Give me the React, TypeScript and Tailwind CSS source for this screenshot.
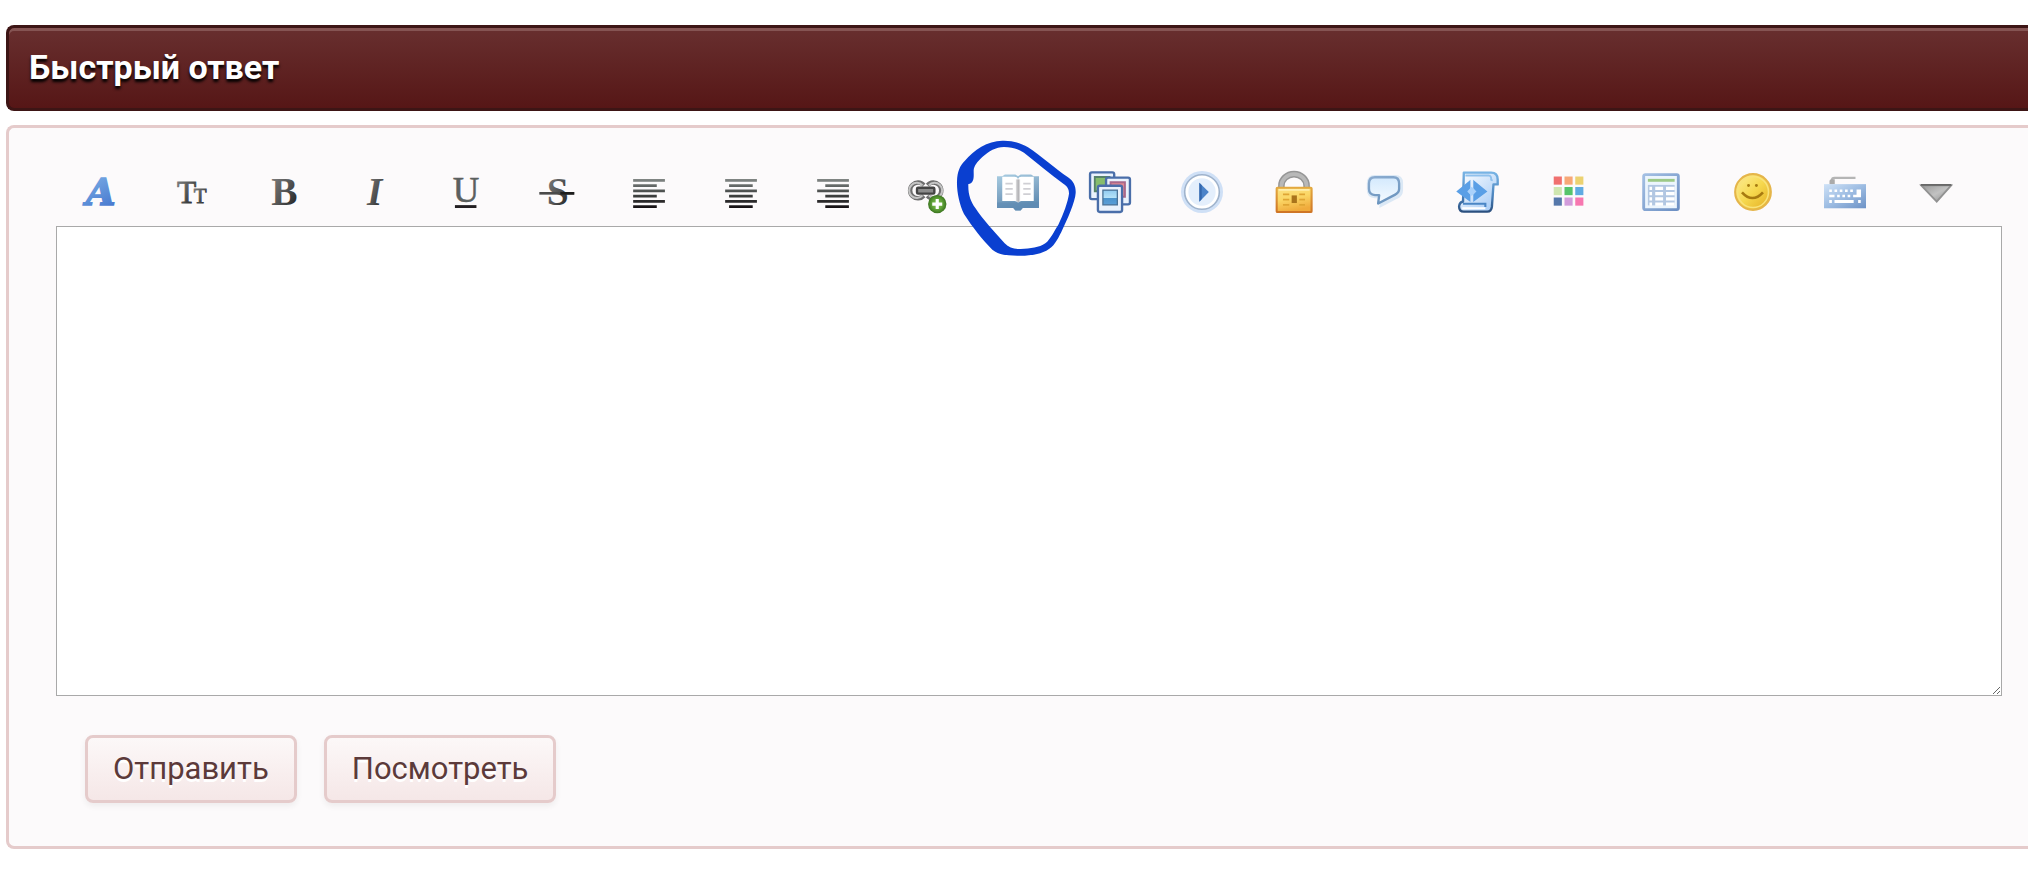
import { useState, type ReactNode } from 'react';

function Glyph({ children }: { children: ReactNode }) {
  return (
    <svg viewBox="0 0 16 16" className="block h-[42px] w-[42px] overflow-visible" aria-hidden="true">
      {children}
    </svg>
  );
}

function Gradients() {
  return (
    <svg className="absolute h-0 w-0" aria-hidden="true">
      <defs>
        <linearGradient id="blueLetter" x1="0" y1="0" x2="0.4" y2="1">
          <stop offset="0" stopColor="#84b9ea" />
          <stop offset="1" stopColor="#4a7bd0" />
        </linearGradient>
        <linearGradient id="ink" x1="0" y1="0" x2="1" y2="1">
          <stop offset="0" stopColor="#858585" />
          <stop offset="0.5" stopColor="#555555" />
          <stop offset="1" stopColor="#141414" />
        </linearGradient>
        <linearGradient id="bars" gradientUnits="userSpaceOnUse" x1="0" y1="3" x2="0" y2="14">
          <stop offset="0" stopColor="#828785" />
          <stop offset="0.5" stopColor="#454847" />
          <stop offset="1" stopColor="#151114" />
        </linearGradient>
        <radialGradient id="greenBall" cx="0.5" cy="0.5" r="0.5">
          <stop offset="0" stopColor="#8cc95a" />
          <stop offset="0.6" stopColor="#5fa237" />
          <stop offset="1" stopColor="#3b7420" />
        </radialGradient>
        <linearGradient id="bookCover" x1="0" y1="0" x2="0.3" y2="1">
          <stop offset="0" stopColor="#a9cde2" />
          <stop offset="0.6" stopColor="#7fa5c4" />
          <stop offset="1" stopColor="#5f8db3" />
        </linearGradient>
        <linearGradient id="sky" x1="0" y1="0" x2="0" y2="1">
          <stop offset="0" stopColor="#8fcaf0" />
          <stop offset="0.5" stopColor="#b5e2f8" />
          <stop offset="0.55" stopColor="#4c93cc" />
          <stop offset="1" stopColor="#5a9fd8" />
        </linearGradient>
        <linearGradient id="lockBody" x1="0" y1="0" x2="0.3" y2="1">
          <stop offset="0" stopColor="#fbe184" />
          <stop offset="0.5" stopColor="#fbd766" />
          <stop offset="1" stopColor="#f0ab3c" />
        </linearGradient>
        <linearGradient id="lockEdge" x1="0" y1="0" x2="0" y2="1">
          <stop offset="0" stopColor="#e3a83f" />
          <stop offset="1" stopColor="#cf7526" />
        </linearGradient>
        <linearGradient id="bubble" x1="0" y1="0" x2="0" y2="1">
          <stop offset="0" stopColor="#d3e9fd" />
          <stop offset="1" stopColor="#f6fbff" />
        </linearGradient>
        <linearGradient id="bubbleEdge" x1="0" y1="0" x2="0.3" y2="1">
          <stop offset="0" stopColor="#8aabcf" />
          <stop offset="1" stopColor="#6c95bf" />
        </linearGradient>
        <linearGradient id="scrollEdge" x1="0" y1="0" x2="0" y2="1">
          <stop offset="0" stopColor="#77b3e4" />
          <stop offset="0.6" stopColor="#4b83bd" />
          <stop offset="1" stopColor="#2b4f7e" />
        </linearGradient>
        <linearGradient id="scrollPaper" x1="0" y1="0" x2="1" y2="1">
          <stop offset="0" stopColor="#ffffff" />
          <stop offset="1" stopColor="#9fc7f5" />
        </linearGradient>
        <linearGradient id="sheetEdge" x1="0" y1="0" x2="1" y2="1">
          <stop offset="0" stopColor="#a3bfe3" />
          <stop offset="1" stopColor="#6c8fc3" />
        </linearGradient>
        <linearGradient id="smile" x1="0" y1="0" x2="1" y2="1">
          <stop offset="0" stopColor="#fdee9a" />
          <stop offset="0.5" stopColor="#f6d84e" />
          <stop offset="1" stopColor="#e2ab1e" />
        </linearGradient>
        <linearGradient id="keys" x1="0" y1="0" x2="1" y2="1">
          <stop offset="0" stopColor="#cfe2f7" />
          <stop offset="0.5" stopColor="#9dbce2" />
          <stop offset="1" stopColor="#6d92c6" />
        </linearGradient>
        <linearGradient id="arrow" x1="0" y1="0" x2="1" y2="1">
          <stop offset="0" stopColor="#9a9a9a" />
          <stop offset="0.5" stopColor="#c2c2c2" />
          <stop offset="1" stopColor="#8a8a8a" />
        </linearGradient>
      </defs>
    </svg>
  );
}

function FontIcon() {
  return (
    <Glyph>
      <text
        x="2.7"
        y="12.8"
        fontSize="14.5"
        className="font-['DejaVu_Serif'] font-bold italic"
        fill="url(#blueLetter)"
        stroke="url(#blueLetter)"
        strokeWidth="0.6"
      >
        A
      </text>
    </Glyph>
  );
}

function SizeIcon() {
  return (
    <Glyph>
      <g className="font-['Liberation_Serif']" fill="url(#ink)" stroke="url(#ink)" strokeWidth="0.3">
        <text x="2.3" y="12" fontSize="12">T</text>
        <text x="8.7" y="12" fontSize="8">T</text>
      </g>
    </Glyph>
  );
}

function BoldIcon() {
  return (
    <Glyph>
      <text x="3.1" y="13" fontSize="15" className="font-['Liberation_Serif'] font-bold" fill="url(#ink)">B</text>
    </Glyph>
  );
}

function ItalicIcon() {
  return (
    <Glyph>
      <text x="4.6" y="13" fontSize="15" className="font-['Liberation_Serif'] font-bold italic" fill="url(#ink)">I</text>
    </Glyph>
  );
}

function UnderlineIcon() {
  return (
    <Glyph>
      <text x="2.6" y="11.8" fontSize="14" className="font-['Liberation_Serif']" fill="#5b605e" stroke="#5b605e" strokeWidth="0.2">U</text>
      <rect x="3.4" y="13" width="8.2" height="1.1" fill="#231f22" />
    </Glyph>
  );
}

function StrikeIcon() {
  return (
    <Glyph>
      <text x="3.3" y="13" fontSize="15" className="font-['Liberation_Serif'] font-bold" fill="url(#ink)">S</text>
      <rect x="0.5" y="8" width="13.3" height="1" fill="#4a4a4a" />
      <rect x="8.5" y="8" width="5.3" height="1" fill="#1d1d1d" />
    </Glyph>
  );
}

function BarsIcon({ shortStart }: { shortStart: number }) {
  return (
    <Glyph>
      <g fill="url(#bars)">
        {[3, 7, 11].map((y) => (
          <path key={y} d={`M1.2 ${y}h12.1v1.1h-12.1zM${shortStart} ${y + 2}h9v1.1h-9z`} />
        ))}
      </g>
    </Glyph>
  );
}

function LinkIcon() {
  return (
    <Glyph>
      <g fill="none">
        <path d="M6.8 5.4A3 3 0 1 0 6.8 9.4M8.2 5.4A3 3 0 1 1 8.2 9.4" stroke="#6e6e6e" strokeWidth="1.7" />
        <path d="M6.3 5.5A2.9 2.9 0 1 0 6.3 9.3M8.7 5.5A2.9 2.9 0 1 1 8.7 9.3" stroke="#c4c4c4" strokeWidth="0.8" />
        <rect x="4.2" y="6.4" width="6.6" height="2.2" rx="0.4" fill="#8c8c8c" stroke="#444444" strokeWidth="0.9" />
      </g>
      <circle cx="11.9" cy="12.6" r="3.5" fill="url(#greenBall)" />
      <path d="M11.9 10.7v3.8M10 12.6h3.8" stroke="#ffffff" strokeWidth="1.2" />
    </Glyph>
  );
}

function BookIcon() {
  return (
    <Glyph>
      <path d="M0 2h2l1-.7h4l1 .7 1-.7h4l1 .7h2v12.1H9.8L9 15H7l-.8-.9H0z" fill="url(#bookCover)" />
      <path d="M0 12h16v2.1H9.8L9 15H7l-.8-.9H0z" fill="#5f8bb2" fillOpacity="0.6" />
      <path d="M2 2.2h4.7q1 0 1.3.8.3-.8 1.3-.8H14v9.2H9.3q-.9 0-1.3.7-.4-.7-1.3-.7H2z" fill="#ffffff" />
      <path d="M7.2 3.2h1.6v8.2H7.2z" fill="#d4d4d6" />
      <path d="M7.8 3.2h.5v8.6h-.5z" fill="#aeaeb2" />
      <path d="M3.2 4.8h2.8M3.2 6.8h2.8M3.2 8.8h2.8M10 4.8h2.8M10 6.8h2.8M10 8.8h2.8" stroke="#cfcfd4" strokeWidth="0.7" />
    </Glyph>
  );
}

function ImagesIcon() {
  return (
    <Glyph>
      <g stroke="#4a6ea9" strokeWidth="0.9" fill="#eaf2fc">
        <rect x="0.4" y="0.5" width="9.2" height="10.2" rx="0.7" />
        <path d="M2.2 2.3h5.6v5.4H2.2z" fill="#86bd6c" stroke="#56826a" strokeWidth="0.7" />
        <rect x="6.5" y="2.5" width="9.1" height="10.2" rx="0.7" />
        <path d="M8.2 4.3h5.5v5.5H8.200z" fill="#dd8791" stroke="#a8688a" strokeWidth="0.7" />
        <rect x="3.4" y="5.6" width="9.2" height="10" rx="0.7" />
      </g>
      <rect x="5.3" y="7.3" width="5.5" height="5.6" fill="url(#sky)" stroke="#4a7297" strokeWidth="0.5" />
    </Glyph>
  );
}

function PlayIcon() {
  return (
    <Glyph>
      <circle cx="8" cy="8" r="8" fill="#cfe0f6" />
      <circle cx="8" cy="8" r="6.6" fill="#ffffff" stroke="#9fb3cc" strokeWidth="0.6" />
      <circle cx="8" cy="8" r="5.2" fill="#e4effc" />
      <path d="M7 4.5v7.2L10.6 8z" fill="#4b83c9" />
      <path d="M7 4.5v7.2l.9-1V5.4z" fill="#3468ae" />
    </Glyph>
  );
}

function LockIcon() {
  return (
    <Glyph>
      <path d="M3.2 7V5.6a4.8 4.4 0 0 1 9.6 0V7" fill="none" stroke="#969696" strokeWidth="2.5" />
      <path d="M3.2 7V5.6a4.8 4.4 0 0 1 9.6 0V7" fill="none" stroke="#b8b8b8" strokeWidth="1.4" />
      <rect x="1.4" y="6.4" width="13.3" height="9.2" rx="0.3" fill="url(#lockBody)" stroke="url(#lockEdge)" strokeWidth="0.8" />
      <path d="M2.2 7.2h11.7" stroke="#fff1b4" strokeWidth="0.6" />
      <path d="M3.8 8.9h2.4M3.8 10.9h2.4M3.8 12.9h2.4M10 8.9h2.2M10 10.9h2.2M10 12.9h2.2" stroke="#dfa534" strokeWidth="0.7" />
      <rect x="7.1" y="9.3" width="2" height="2.9" fill="#a9731b" />
    </Glyph>
  );
}

function QuoteIcon() {
  return (
    <Glyph>
      <path
        d="M3.6 2.4h7.8q2.2 0 2.2 2.2v2.6q0 1.8-1.6 2.5L6.5 12.5l.3-3H3.8Q1.6 9.3 1.6 7.2V4.6Q1.6 2.4 3.6 2.4z"
        fill="url(#bubble)"
        stroke="#dbe8f5"
        strokeWidth="1.8"
      />
      <path
        d="M3.8 2.4h7q2.200 0 2.200 2.400v2q0 1.500-1.500 2.200L5 12.400 5.400 9.200H3.800Q1.500 9 1.500 6.800V4.800Q1.500 2.400 3.800 2.400z"
        fill="url(#bubble)"
        stroke="url(#bubbleEdge)"
        strokeWidth="0.9"
        strokeLinejoin="round"
      />
    </Glyph>
  );
}

function CodeIcon() {
  return (
    <Glyph>
      <path
        d="M2.6.6H13q2.500 0 2.500 2.600v1.900h-1.600L13.300 13.600q-.2 1.900-1.800 1.900H2.600Q.8 15.500.8 13.500 1 11.700 2.300 11.700z"
        fill="url(#scrollPaper)"
        stroke="url(#scrollEdge)"
        strokeWidth="0.9"
        strokeLinejoin="round"
      />
      <path d="M3.2 1.700H12q1.200.2 1 1.600l.6.300" fill="none" stroke="#8fc0ec" strokeWidth="0.7" />
      <path d="M2.3 12.500h8.500v1.200" fill="none" stroke="#4a86c5" strokeWidth="0.8" />
      <path d="M2 14.200h8.800" stroke="#ffffff" strokeWidth="0.8" />
      <path d="M4.800 4 .2 7.800l4.600 3.400V9L3.900 7.800l.9-1.200zM6.500 4l4.600 3.800-4.600 3.400V9l1-1.200-1-1.200z" fill="#5a9fe6" stroke="#5a9fe6" strokeWidth="0.6" />
      <path d="M5.600 6 3.900 7.800l1.700 1.700 1.800-1.700z" fill="#a9d1fb" />
    </Glyph>
  );
}

const swatches = ['#f0706f', '#f7a877', '#ecd271', '#cfe6b0', '#57c46b', '#5faae2', '#5577aa', '#d29cdb', '#f777b0'];

function ColorIcon() {
  return (
    <Glyph>
      {swatches.map((color, i) => (
        <rect key={color} x={1.8 + (i % 3) * 4.1} y={2.1 + Math.floor(i / 3) * 4} width="3.1" height="3.1" fill={color} />
      ))}
    </Glyph>
  );
}

function TableIcon() {
  return (
    <Glyph>
      <rect x="1.4" y="1.4" width="13.2" height="13.3" rx="0.6" fill="#ecf5fd" stroke="url(#sheetEdge)" strokeWidth="1.1" />
      <rect x="3" y="3" width="10.2" height="1.1" fill="#9cc987" />
      <rect x="3" y="5.3" width="10.2" height="7.8" fill="#b2c7e2" />
      {[6, 8, 10, 12].map((y) => (
        <path key={y} d={`M3.6 ${y}h1v1.2h-1zM5.8 ${y}h3v1.2h-3zM9.9 ${y}h3.3v1.2H9.9z`} fill="#ffffff" />
      ))}
    </Glyph>
  );
}

function SmileIcon() {
  return (
    <Glyph>
      <circle cx="8" cy="8" r="6.8" fill="url(#smile)" stroke="#e5b54a" strokeWidth="0.8" />
      <circle cx="8" cy="8" r="5.9" fill="none" stroke="#f9e27a" strokeWidth="0.6" />
      <circle cx="6.3" cy="5.5" r="0.55" fill="#a67c12" />
      <circle cx="9.3" cy="5.5" r="0.55" fill="#a67c12" />
      <path d="M3.8 8.1q4 4.4 8 0" fill="none" stroke="#a77a10" strokeWidth="1" />
    </Glyph>
  );
}

function KeyboardIcon() {
  return (
    <Glyph>
      <path d="M3 5V3.5q0-.9 1-.9h8" fill="none" stroke="#b5b5b5" strokeWidth="0.8" />
      <path d="M2.1 5V3.8q0-.7.7-.7h1.3V5z" fill="#aaaaaa" />
      <rect x="0" y="5" width="16" height="9.2" fill="url(#keys)" />
      <path
        d="M2 7h1v1H2zM4 7h1v1H4zM6 7h1v1H6zM8 7h1v1H8zM10 7h1v1h-1zM12.4 7h1.700v3h-3V9h1.300zM2 9h2v1H2zM5 9h1v1H5zM7 9h1v1H7zM9 9h1v1H9zM2 11h1v1.200H2zM4 11h7.300v1.200H4zM13 11h1v1.200h-1z"
        fill="#ffffff"
      />
    </Glyph>
  );
}

function ArrowIcon() {
  return (
    <Glyph>
      <path d="M2 5.5h11.4L7.9 11.7z" fill="url(#arrow)" stroke="#929292" strokeWidth="0.7" />
      <path d="M1.8 5.3h11.7" stroke="#686868" strokeWidth="0.7" />
    </Glyph>
  );
}

// pen stroke drawn around the dictionary button
function PenMark() {
  return (
    <svg
      viewBox="220 25 375 360"
      className="pointer-events-none absolute -left-[43px] -top-[33px] z-10 h-[120px] w-[125px] max-w-none"
      aria-hidden="true"
    >
      <path
        fillRule="evenodd"
        fill="#0a3fd0"
        d="M365 33C395 32 420 40 442 53C480 78 525 118 562 143C580 155 586 172 585 190C584 215 560 270 542 307C530 330 520 352 497 363C470 376 440 379 410 378C380 378 355 376 335 360C305 330 275 292 250 253C236 225 228 185 229 155C230 125 238 108 252 94C280 60 320 34 365 33ZM370 52C345 52 325 65 305 82C290 96 280 108 279 122C279 140 282 160 263 163C262 195 270 215 284 235C305 268 345 310 372 341C385 354 400 359 420 358C450 357 475 354 494 341C510 328 520 305 533 285C548 255 562 215 565 192C565 178 560 170 548 162C510 135 470 100 430 69C412 58 395 52 370 52Z"
      />
    </svg>
  );
}

const tools: { label: string; icon: ReactNode; marked?: boolean }[] = [
  { label: 'Шрифт', icon: <FontIcon /> },
  { label: 'Размер шрифта', icon: <SizeIcon /> },
  { label: 'Жирный', icon: <BoldIcon /> },
  { label: 'Курсив', icon: <ItalicIcon /> },
  { label: 'Подчёркнутый', icon: <UnderlineIcon /> },
  { label: 'Зачёркнутый', icon: <StrikeIcon /> },
  { label: 'По левому краю', icon: <BarsIcon shortStart={1.2} /> },
  { label: 'По центру', icon: <BarsIcon shortStart={2.7} /> },
  { label: 'По правому краю', icon: <BarsIcon shortStart={4.3} /> },
  { label: 'Ссылка', icon: <LinkIcon /> },
  { label: 'Словарь', icon: <BookIcon />, marked: true },
  { label: 'Изображение', icon: <ImagesIcon /> },
  { label: 'Видео', icon: <PlayIcon /> },
  { label: 'Скрытый текст', icon: <LockIcon /> },
  { label: 'Цитата', icon: <QuoteIcon /> },
  { label: 'Код', icon: <CodeIcon /> },
  { label: 'Цвет текста', icon: <ColorIcon /> },
  { label: 'Таблица', icon: <TableIcon /> },
  { label: 'Смайлики', icon: <SmileIcon /> },
  { label: 'Клавиатура', icon: <KeyboardIcon /> },
  { label: 'Дополнительно', icon: <ArrowIcon /> }
];

const buttonClass =
  'h-[68px] rounded-lg border-3 border-[#e5cbcb] bg-linear-to-b from-[#fcf8f8] to-[#f5e7e7] px-[25px] text-[31px] leading-9 text-[#5c3a3a] shadow-[0_3px_6px_rgba(0,0,0,0.06)] [text-shadow:0_3px_0_#ffffff]';

export default function App() {
  const [message, setMessage] = useState('');

  return (
    <main className="min-h-screen bg-white pt-[25px] pl-1.5 font-[Roboto,sans-serif]">
      <Gradients />
      <h2 className="flex h-[86px] items-center rounded-l-lg border-y-3 border-l-3 border-[#3d1515] bg-linear-to-b from-[#682f2f] to-[#561616] px-5 pb-0.5 text-[34px] font-bold text-white shadow-[inset_0_3px_0_#855453] [text-shadow:0_3px_3px_#000000]">
        Быстрый ответ
      </h2>

      <form
        className="mt-3.5 rounded-l-lg border-y-3 border-l-3 border-[#e5cbcb] bg-[#fcfafb] pt-[43px] pr-[26px] pb-[43px] pl-[47px]"
        onSubmit={(event) => event.preventDefault()}
      >
        <div className="flex justify-between pr-11 pl-[23px]" role="toolbar" aria-label="Форматирование">
          {tools.map((tool) => (
            <button key={tool.label} type="button" aria-label={tool.label} className="relative shrink-0">
              {tool.icon}
              {tool.marked ? <PenMark /> : null}
            </button>
          ))}
        </div>

        <textarea
          aria-label="Сообщение"
          value={message}
          onChange={(event) => setMessage(event.target.value)}
          className="mt-[13px] block h-[470px] w-full border border-[#a9a9a9] bg-white p-2 text-3xl outline-none"
        />

        <div className="mt-[39px] flex gap-[27px] pl-[29px]">
          <button type="submit" className={buttonClass}>
            Отправить
          </button>
          <button type="button" className={buttonClass}>
            Посмотреть
          </button>
        </div>
      </form>
    </main>
  );
}
